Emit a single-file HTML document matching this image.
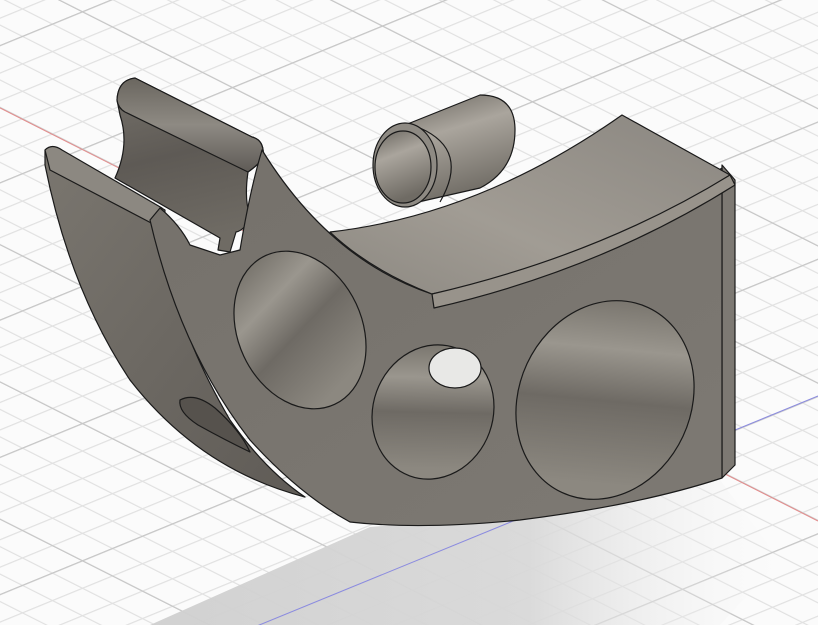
<!DOCTYPE html>
<html><head><meta charset="utf-8"><style>html,body{margin:0;padding:0;background:#fff;overflow:hidden}svg{display:block}</style></head>
<body>
<svg width="818" height="625" viewBox="0 0 818 625" xmlns="http://www.w3.org/2000/svg">
<defs>
<pattern id="g1" width="10" height="10" patternUnits="userSpaceOnUse" patternTransform="matrix(3 1.515 3 -1.23 681 452)">
<path d="M0 0H10M0 0V10" stroke="#e2e2e2" stroke-width="1" fill="none" vector-effect="non-scaling-stroke"/>
</pattern>
<pattern id="g2" width="50" height="50" patternUnits="userSpaceOnUse" patternTransform="matrix(3 1.515 3 -1.23 681 452)">
<path d="M0 0H50M0 0V50" stroke="#c8c8c8" stroke-width="1" fill="none" vector-effect="non-scaling-stroke"/>
</pattern>
<linearGradient id="sh" x1="0" y1="0" x2="1" y2="0">
<stop offset="0" stop-color="#cfcfcf"/><stop offset="0.6" stop-color="#d8d8d8"/><stop offset="1" stop-color="#f4f4f4" stop-opacity="0"/>
</linearGradient>
<linearGradient id="front" x1="0" y1="0" x2="1" y2="1">
<stop offset="0" stop-color="#75716b"/><stop offset="1" stop-color="#7d7973"/>
</linearGradient>
<linearGradient id="top" x1="0" y1="1" x2="1" y2="0">
<stop offset="0" stop-color="#8c8881"/><stop offset="0.4" stop-color="#a19c94"/><stop offset="1" stop-color="#8a8680"/>
</linearGradient>
<linearGradient id="left" x1="0" y1="0" x2="1" y2="1">
<stop offset="0" stop-color="#7a766f"/><stop offset="1" stop-color="#5f5b56"/>
</linearGradient>
<linearGradient id="hole" x1="0" y1="0" x2="0.3" y2="1">
<stop offset="0" stop-color="#6a665f"/><stop offset="0.35" stop-color="#9a968e"/><stop offset="0.6" stop-color="#6e6a64"/><stop offset="1" stop-color="#8c8880"/>
</linearGradient>
<linearGradient id="cyl" x1="0" y1="0" x2="0.3" y2="1">
<stop offset="0" stop-color="#6b6760"/><stop offset="0.4" stop-color="#aaa59d"/><stop offset="1" stop-color="#6f6b64"/>
</linearGradient>
<linearGradient id="rail" x1="0" y1="0" x2="0.2" y2="1">
<stop offset="0" stop-color="#77736c"/><stop offset="0.5" stop-color="#5e5a55"/><stop offset="1" stop-color="#6f6b64"/>
</linearGradient>
<linearGradient id="railtop" x1="0" y1="0" x2="0" y2="1">
<stop offset="0" stop-color="#6a665f"/><stop offset="0.5" stop-color="#8e8a83"/><stop offset="1" stop-color="#5f5b56"/>
</linearGradient>
</defs>
<rect width="818" height="625" fill="#fbfbfb"/>
<rect width="818" height="625" fill="url(#g1)"/>
<rect width="818" height="625" fill="url(#g2)"/>
<path d="M150 625 L370 527 L560 512 L720 480 L780 560 L720 625 Z" fill="url(#sh)" opacity="0.95"/>
<line x1="0" y1="108" x2="818" y2="521" stroke="#e58a8a" stroke-width="1"/>
<line x1="230" y1="637" x2="818" y2="396" stroke="#8a8ae0" stroke-width="1"/>
<g stroke="#1a1a1a" stroke-width="1.2" stroke-linejoin="round">
<path d="M117 100 Q118 80 135 78 L252 137 Q265 140 263 158 Q258 165 248 172 Q244 200 250 215 Q246 230 236 232 L230 252 L218 250 L220 238 L115 178 Q130 145 120 115 Z" fill="url(#rail)"/>
<path d="M117 100 Q118 80 135 78 L252 137 Q265 140 263 158 Q258 165 248 172 L125 112 Q118 108 117 100 Z" fill="url(#railtop)"/>
<path d="M45 150 Q50 145 60 150 L165 210 Q160 300 230 420 Q265 470 305 497 Q200 470 130 380 Q70 290 45 165 Z" fill="url(#left)"/>
<path d="M45 150 Q52 143 62 150 L162 208 L155 225 L50 170 Z" fill="#8c8881"/>
<path d="M180 400 Q195 392 215 408 Q240 430 250 452 Q225 440 198 425 Q178 412 180 400 Z" fill="#56524d"/>
<path d="M722 165 L735 180 L735 465 L722 478 Z" fill="#7d7973"/>
<path d="M150 220 L160 208 Q180 225 190 245 L220 255 L240 250 Q250 190 262 150 Q330 260 432 294 Q600 250 722 168 L722 478 Q640 505 520 520 Q420 530 350 522 Q300 495 250 440 Q180 350 150 220 Z" fill="url(#front)"/>
<path d="M330 232 Q480 215 622 115 L730 175 Q600 260 432 294 Q370 270 330 232 Z" fill="url(#top)"/>
<path d="M432 294 Q600 255 730 175 L735 185 Q600 270 434 308 Z" fill="#98938b"/>
<ellipse cx="300" cy="330" rx="62" ry="82" transform="rotate(-25 300 330)" fill="url(#hole)"/>
<ellipse cx="433" cy="412" rx="60" ry="68" transform="rotate(20 433 412)" fill="url(#hole)"/>
<ellipse cx="455" cy="368" rx="26" ry="20" fill="#e8e8e6"/>
<ellipse cx="605" cy="400" rx="86" ry="102" transform="rotate(25 605 400)" fill="url(#hole)"/>
<path d="M405 125 L480 95 Q515 95 515 130 Q515 170 480 188 L405 205 Z" fill="url(#cyl)"/>
<ellipse cx="405" cy="165" rx="32" ry="42" fill="#8e8a83"/>
<ellipse cx="403" cy="167" rx="28" ry="36" fill="url(#cyl)"/>
<path d="M420 128 Q470 150 440 202" fill="none"/>
</g>
</svg>
</body></html>
